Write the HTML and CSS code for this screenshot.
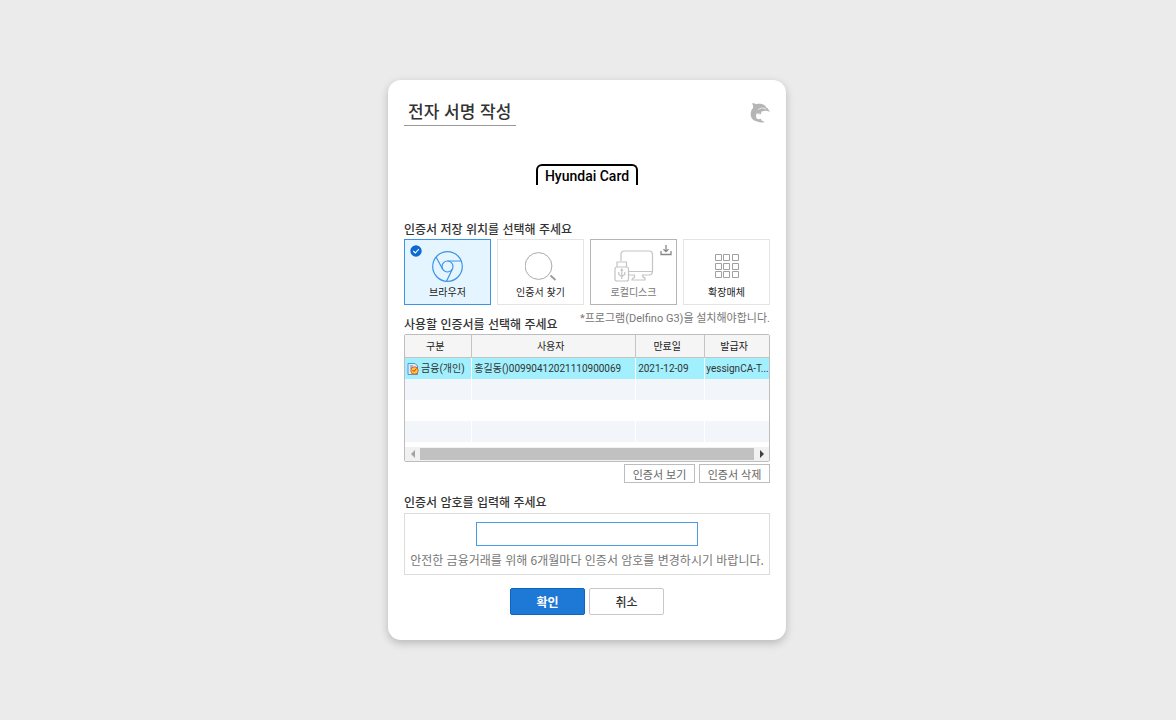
FILE: index.html
```html
<!DOCTYPE html>
<html lang="ko">

<head>
    <meta charset="utf-8">
    <meta name="viewport" content="width=device-width, initial-scale=1">
    <title>전자 서명 작성</title>
    <link rel="stylesheet" href="styles.css">
</head>

<body>

    <form class="dialog">
        <header class="dialog-header">
            <h1>전자 서명 작성</h1>
            <svg class="dolphin" width="20" height="20" viewBox="0 0 20 20" aria-hidden="true">
                <path fill="#b5b5b5" d="M2 0.500C3.500 0 5 0.500 6.200 1.200C10 0 14.500 1 16.300 4.500C18 5.500 19.200 7 19.700 9C18 8 16 7.600 14 8L11.500 8.500C11.500 9.500 11 11 9.800 12L9.500 10L7.500 11.500L7.500 9.500C5.500 11.500 5.500 15 8 16.200L11.500 15.800L11 17L14.500 19C12 20 9.500 19.500 8 18.700C3 18.200 0.300 14.500 0.700 10.500C1 7.500 2 6 3.200 4.700C3.200 3 3 1.700 2 0.500Z" />
                <path fill="none" stroke="#fff" stroke-width="0.700" d="M8 6.800C10 4.800 13 4.400 16 6" />
            </svg>
        </header>

        <div class="brand"><span>Hyundai Card</span></div>

        <fieldset class="storage">
            <legend>인증서 저장 위치를 선택해 주세요</legend>
            <div class="options">
                <label class="option">
                    <input type="radio" name="storage" value="browser" checked>
                    <svg class="badge check" width="12" height="12" viewBox="0 0 12 12" aria-hidden="true">
                        <circle cx="6" cy="6" r="5.700" fill="#0b69d0" />
                        <path d="M3.300 6L5.300 8L8.800 4.200" fill="none" stroke="#fff" stroke-width="1.100" />
                    </svg>
                    <svg width="32" height="32" viewBox="0 0 32 32" fill="none" stroke="#3c93e8" stroke-width="1.200" aria-hidden="true">
                        <circle cx="15.500" cy="16.500" r="14.800" />
                        <circle cx="15.500" cy="16.500" r="5.500" />
                        <path d="M15.500 11H29.200M10.700 19.300L4.200 7.200M20.300 19.300L14.500 31.200" />
                    </svg>
                    <span>브라우저</span>
                </label>
                <label class="option">
                    <input type="radio" name="storage" value="find">
                    <svg width="32" height="32" viewBox="0 0 32 32" fill="none" stroke="#aaa" aria-hidden="true">
                        <circle cx="13.500" cy="16" r="13.400" />
                        <path stroke="#999" stroke-width="1.700" d="M25.500 25.500L30.500 30" />
                    </svg>
                    <span>인증서 찾기</span>
                </label>
                <label class="option unavailable">
                    <input type="radio" name="storage" value="disk" disabled>
                    <svg class="badge download" width="12" height="11" viewBox="0 0 12 11" fill="none" stroke="#888" stroke-width="1.300" aria-hidden="true">
                        <path d="M1 6V9.500H11V6M6 0V6.500M3.500 4.200L6 6.700L8.500 4.200" />
                    </svg>
                    <svg width="40" height="32" viewBox="0 0 40 32" fill="none" stroke="#c4c4c4" stroke-width="1.200" aria-hidden="true">
                        <path d="M7 11V4.500Q7 1 10.500 1H35Q38.500 1 38.500 4.500V21Q38.500 25 35 25H28.500Q28.500 27.500 31 28V30H18Q18 28 20.500 27.500V25H15M15 21.500H38.500" />
                        <path d="M3 17V12H12.500V17M3 17H12.500Q14.500 17 14.500 19V29Q14.500 31 12.500 31H3Q1 31 1 29V19Q1 17 3 17Z" />
                        <path d="M7.800 19V29M4.800 22V24.500L7.800 26.500L10.800 24.500V22M6.600 20.500L7.800 19L9 20.500" />
                    </svg>
                    <span>로컬디스크</span>
                </label>
                <label class="option">
                    <input type="radio" name="storage" value="media">
                    <svg width="32" height="32" viewBox="0 0 32 32" fill="none" stroke="#a0a0a0" aria-hidden="true">
                        <path d="M4.500 4.500h6v6h-6zM12.500 4.500h6v6h-6zM21.500 4.500h6v6h-6zM4.500 13.500h6v6h-6zM12.500 13.500h6v6h-6zM21.500 13.500h6v6h-6zM4.500 21.500h6v6h-6zM12.500 21.500h6v6h-6zM21.500 21.500h6v6h-6z" />
                    </svg>
                    <span>확장매체</span>
                </label>
            </div>
        </fieldset>

        <section class="certs">
            <div class="certs-title">
                <h2>사용할 인증서를 선택해 주세요</h2>
                <p>*프로그램(Delfino G3)을 설치해야합니다.</p>
            </div>

            <div class="grid">
                <table>
                    <colgroup>
                        <col class="col-type">
                        <col class="col-user">
                        <col class="col-date">
                        <col class="col-issuer">
                    </colgroup>
                    <thead>
                        <tr><th>구분</th><th>사용자</th><th>만료일</th><th>발급자</th></tr>
                    </thead>
                    <tbody>
                        <tr class="selected">
                            <td>
                                <span class="cert-type">
                                    <svg width="12" height="12" viewBox="0 0 12 12" aria-hidden="true">
                                        <path d="M1 0.500H8L10.500 3V11.500H1Z" fill="#dbeaff" stroke="#5792d0" />
                                        <path d="M3 3H6M3 5H5" stroke="#5792d0" />
                                        <circle cx="7.500" cy="7.500" r="3.700" fill="#ffc83d" stroke="#df5b25" />
                                        <path d="M7 8.500L9.500 5.500M7 8.500L5.500 7" stroke="#c83214" fill="none" />
                                    </svg>
                                    금융(개인)
                                </span>
                            </td>
                            <td>홍길동()00990412021110900069</td>
                            <td>2021-12-09</td>
                            <td>yessignCA-T...</td>
                        </tr>
                        <tr><td></td><td></td><td></td><td></td></tr>
                        <tr><td></td><td></td><td></td><td></td></tr>
                        <tr><td></td><td></td><td></td><td></td></tr>
                    </tbody>
                </table>
                <div class="scrollbar">
                    <button type="button" aria-label="왼쪽으로">
                        <svg width="4" height="8" viewBox="0 0 4 8"><path d="M4 0V8L0 4Z" fill="#a3a3a3" /></svg>
                    </button>
                    <div class="thumb"></div>
                    <button type="button" aria-label="오른쪽으로">
                        <svg width="4" height="8" viewBox="0 0 4 8"><path d="M0 0V8L4 4Z" fill="#404040" /></svg>
                    </button>
                </div>
            </div>

            <div class="cert-actions">
                <button type="button">인증서 보기</button>
                <button type="button">인증서 삭제</button>
            </div>
        </section>

        <section class="password">
            <label for="psw">인증서 암호를 입력해 주세요</label>
            <div class="password-box">
                <input type="password" id="psw" name="psw">
                <p>안전한 금융거래를 위해 6개월마다 인증서 암호를 변경하시기 바랍니다.</p>
            </div>
        </section>

        <footer class="buttons">
            <button type="submit" class="confirm">확인</button>
            <button type="button" class="cancel">취소</button>
        </footer>
    </form>

</body>

</html>
```
FILE: styles.css
```css
* {
    box-sizing: border-box;
}

body {
    margin: 0;
    padding: 80px 2px 80px 0;
    background-color: #ebebeb;
    color: #333;
    font-family: "Noto Sans CJK KR", sans-serif;
    font-size: 10px;
    line-height: 16px;
}

h1,
h2,
p {
    margin: 0;
}

button,
input {
    margin: 0;
    font-family: inherit;
}

button {
    padding: 0;
    cursor: pointer;
}

.dialog {
    max-width: 398px;
    margin: 0 auto;
    padding: 16px 16px 25px;
    background-color: #fff;
    border-radius: 13px;
    box-shadow: 0 3px 8px rgba(0, 0, 0, 0.22);
}

.dialog-header {
    display: flex;
    justify-content: space-between;
    align-items: flex-end;
}

.dolphin {
    margin-bottom: 3px;
}

h1 {
    padding: 2px 5px 2px 4px;
    border-bottom: 1px solid #999;
    font-size: 17px;
    font-weight: 500;
    line-height: 25px;
}

/* brand */
.brand {
    display: flex;
    justify-content: center;
    margin: 38px 0 35px;
}

.brand span {
    padding: 2px 7px 0;
    border: 2px solid #000;
    border-bottom: none;
    border-radius: 6px 6px 0 0;
    color: #000;
    font-family: Roboto, sans-serif;
    font-size: 14px;
    font-weight: 500;
    line-height: 17px;
}

/* storage location */
.storage {
    min-width: 0;
    margin: 0;
    padding: 0;
    border: none;
}

.storage legend,
h2,
.password label {
    padding: 0;
    font-size: 12px;
    font-weight: 500;
    line-height: 18px;
}

.options {
    display: grid;
    grid-template-columns: repeat(4, 1fr);
    gap: 6px;
    margin-top: 1px;
}

.option {
    position: relative;
    display: flex;
    flex-direction: column;
    align-items: center;
    height: 66px;
    padding-top: 10px;
    border: 1px solid #e4e4e4;
    color: #222;
    cursor: pointer;
}

.option input {
    position: absolute;
    opacity: 0;
}

.option span {
    margin-top: 2px;
}

.option:has(input:checked) {
    background-color: #e5f5ff;
    border-color: #3c93e8;
}

.option.unavailable {
    border-color: #b5b5b5;
    color: #777;
}

.badge {
    position: absolute;
    top: 5px;
}

.check {
    left: 5px;
}

.download {
    right: 4px;
}

/* certificate list */
.certs-title {
    display: flex;
    justify-content: space-between;
    margin: 5px 0 1px;
}

.certs-title h2 {
    margin-top: 5px;
}

.certs-title p {
    color: #777;
    font-family: Roboto, "Noto Sans CJK KR", sans-serif;
    font-size: 11px;
    line-height: 18px;
}

.grid {
    border: 1px solid #bdbdbd;
    border-radius: 2px;
}

table {
    width: 100%;
    table-layout: fixed;
    border-collapse: separate;
    border-spacing: 0;
}

.col-type {
    width: 18.5%;
}

.col-user {
    width: 45%;
}

.col-date {
    width: 19%;
}

th {
    height: 23px;
    padding: 0 6px 0 0;
    background-color: #f5f5f5;
    border-right: 1px solid #c4c4c4;
    border-bottom: 1px solid #c4c4c4;
    font-weight: 400;
    color: #222;
}

td {
    height: 21px;
    padding: 0 0 0 2px;
    border-right: 1px solid #fff;
    font-family: Roboto, "Noto Sans CJK KR", sans-serif;
    white-space: nowrap;
}

tr > :last-child {
    border-right: none;
}

td:last-child {
    padding-left: 1px;
}

tbody tr:nth-child(even) {
    background-color: #f2f6fb;
}

tbody .selected {
    background-color: #a2f0fe;
}

.cert-type {
    display: flex;
    align-items: center;
    gap: 2px;
}

.scrollbar {
    display: flex;
    height: 14px;
    margin-top: 5px;
    background-color: #f1f1f1;
}

.scrollbar button {
    display: flex;
    align-items: center;
    justify-content: center;
    width: 15px;
    border: none;
    background: none;
}

.thumb {
    flex: 1;
    margin: 1px 0;
    background-color: #c1c1c1;
}

.cert-actions {
    display: flex;
    justify-content: flex-end;
    gap: 4px;
    margin-top: 2px;
}

.cert-actions button {
    width: 71px;
    height: 19px;
    border: 1px solid #bdbdbd;
    background-color: #fff;
    color: #666;
    font-size: 11px;
    line-height: 16px;
}

/* password */
.password {
    margin-top: 10px;
}

.password label {
    display: block;
}

.password-box {
    display: flex;
    flex-direction: column;
    align-items: center;
    margin-top: 2px;
    padding: 8px 0 6px;
    border: 1px solid #dcdcdc;
}

.password-box input {
    width: 61%;
    height: 24px;
    padding: 0 6px;
    border: 1px solid #4a9ae8;
    outline: none;
}

.password-box p {
    margin-top: 6px;
    color: #777;
    font-size: 12px;
}

.buttons {
    display: flex;
    justify-content: center;
    gap: 4px;
    margin-top: 13px;
}

.buttons button {
    width: 75px;
    height: 27px;
    border: 1px solid #c8c8c8;
    border-radius: 2px;
    background-color: #fff;
    color: #333;
    font-size: 12px;
    font-weight: 500;
}

.buttons .confirm {
    border-color: #0c66c2;
    background-color: #1e78d6;
    color: #fff;
    font-weight: 700;
}
```
